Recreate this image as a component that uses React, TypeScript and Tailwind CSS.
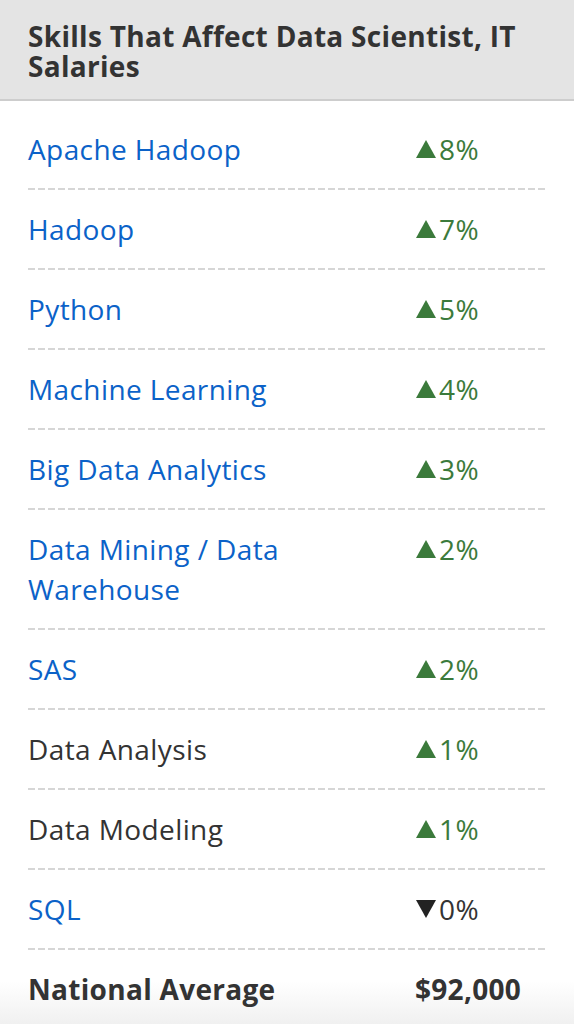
import React from "react";

type Row = { name: string; link: boolean; up: boolean; value: string };

const rows: Row[] = [
  { name: "Apache Hadoop", link: true, up: true, value: "8%" },
  { name: "Hadoop", link: true, up: true, value: "7%" },
  { name: "Python", link: true, up: true, value: "5%" },
  { name: "Machine Learning", link: true, up: true, value: "4%" },
  { name: "Big Data Analytics", link: true, up: true, value: "3%" },
  { name: "Data Mining / Data Warehouse", link: true, up: true, value: "2%" },
  { name: "SAS", link: true, up: true, value: "2%" },
  { name: "Data Analysis", link: false, up: true, value: "1%" },
  { name: "Data Modeling", link: false, up: true, value: "1%" },
  { name: "SQL", link: true, up: false, value: "0%" },
];

function Sep() {
  return (
    <div className="h-[2px] w-full bg-[linear-gradient(to_right,#d6d6d6_70%,transparent_70%)] bg-[length:10px_2px] bg-repeat-x" />
  );
}

function Tri({ up }: { up: boolean }) {
  return (
    <svg width="22" height="20" viewBox="0 0 22 20" className="mr-[2px]">
      {up ? (
        <polygon points="11,1 21,19 1,19" fill="#3b7a3b" />
      ) : (
        <polygon points="1,1 21,1 11,19" fill="#222" />
      )}
    </svg>
  );
}

export default function App() {
  return (
    <div className="w-[574px] h-[1024px] overflow-hidden bg-white font-['Open_Sans',sans-serif]">
      <div className="bg-[#e4e4e4] border-b-2 border-[#cdcdcd] h-[101px] px-[28px] pt-[21px]">
        <h2 className="text-[28px] leading-[30px] font-bold tracking-[0.3px] text-[#333]">
          Skills That Affect Data Scientist, IT Salaries
        </h2>
      </div>
      <div className="px-[28px] pt-[9px]">
        {rows.map((r) => (
          <div key={r.name}>
            <div className="grid grid-cols-[387px_1fr] py-[19px] text-[28px] leading-[40px] tracking-[0.4px]">
              <div className={r.link ? "text-[#0b62c8] pr-[80px]" : "text-[#333]"}>{r.name}</div>
              <div className={"flex items-center h-[40px] " + (r.up ? "text-[#3b7a3b]" : "text-[#333]")}>
                <Tri up={r.up} />
                <span>{r.value}</span>
              </div>
            </div>
            <Sep />
          </div>
        ))}
      </div>
      <div className="px-[28px] bg-[linear-gradient(to_bottom,#ffffff_0%,#ffffff_40%,#efefef_100%)]">
        <div className="grid grid-cols-[387px_1fr] py-[19px] text-[28px] leading-[40px] font-bold tracking-[0.3px] text-[#333]">
          <div>National Average</div>
          <div>$92,000</div>
        </div>
      </div>
    </div>
  );
}
